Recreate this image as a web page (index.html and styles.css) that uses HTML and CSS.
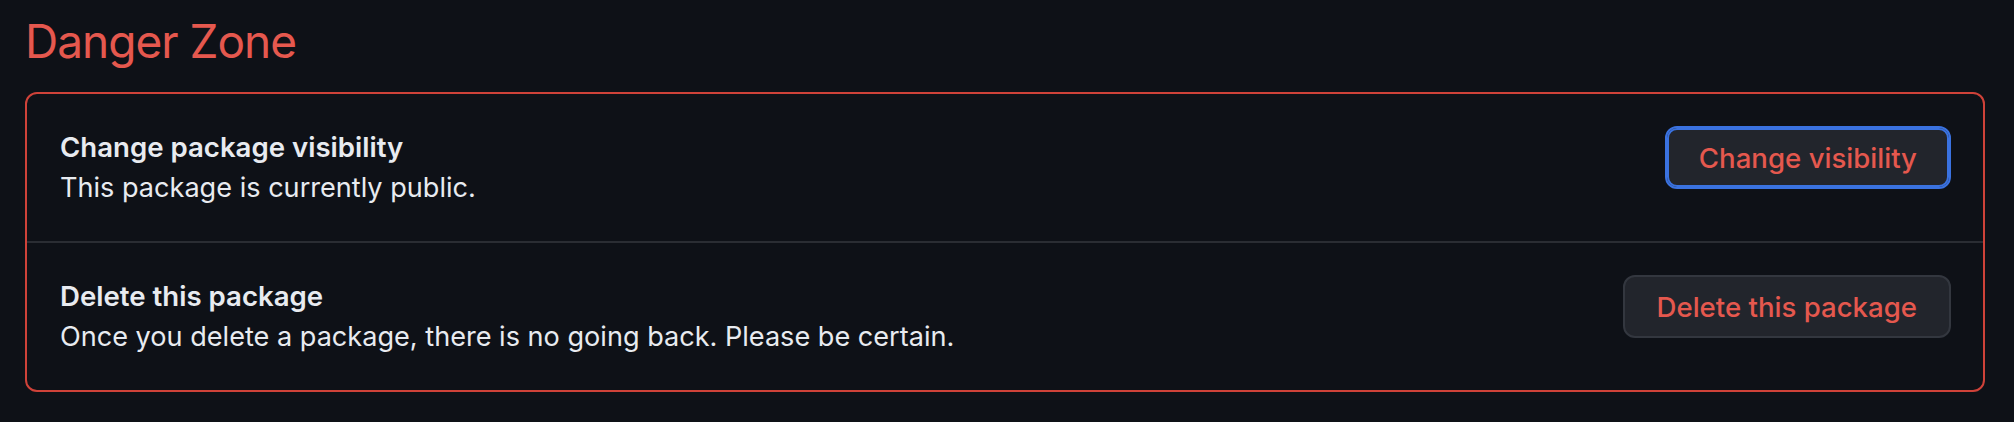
FILE: index.html
```html
<!DOCTYPE html>
<html lang="en">
<head>
<meta charset="utf-8">
<title>Danger Zone</title>
<link rel="stylesheet" href="styles.css">
</head>
<body>
<div class="page">
  <h2 class="heading">Danger Zone</h2>
  <div class="box">
    <div class="row">
      <div class="info">
        <div class="row-title">Change package visibility</div>
        <div class="row-desc">This package is currently public.</div>
      </div>
      <button class="btn btn-focus" type="button">Change visibility</button>
    </div>
    <div class="row">
      <div class="info">
        <div class="row-title">Delete this package</div>
        <div class="row-desc">Once you delete a package, there is no going back. Please be certain.</div>
      </div>
      <button class="btn" type="button">Delete this package</button>
    </div>
  </div>
</div>
</body>
</html>
```

FILE: styles.css
```css
html, body {
  margin: 0;
  padding: 0;
  background: #0e1117;
}

body {
  font-family: "Inter", "Noto Sans", "Liberation Sans", sans-serif;
  color: #e8ebf0;
}

.page {
  padding: 13px 29px 0 25px;
}

.heading {
  margin: 0 0 23px;
  font-size: 46px;
  line-height: 56px;
  font-weight: 400;
  letter-spacing: -1px;
  color: #e5584e;
}

.box {
  border: 2px solid #cf4239;
  border-radius: 12px;
}

.row {
  display: flex;
  justify-content: space-between;
  align-items: flex-start;
  padding: 32px 32px 32px 33px;
  min-height: 83px;
}

.row + .row {
  border-top: 2px solid #2a2d33;
}

.info {
  display: flex;
  flex-direction: column;
}

.row-title {
  font-size: 27.6px;
  line-height: 42px;
  font-weight: 600;
}

.row-desc {
  font-size: 27.1px;
  line-height: 40px;
  font-weight: 400;
}

.btn {
  box-sizing: border-box;
  height: 63px;
  padding: 0 32px;
  border: 2px solid #33373f;
  border-radius: 12px;
  background: #22252c;
  color: #e5584e;
  font-family: inherit;
  font-size: 27.6px;
  font-weight: 500;
  cursor: pointer;
}

.btn-focus {
  border-color: #3a72e0;
  box-shadow: inset 0 0 0 2px #3a72e0;
}
```
